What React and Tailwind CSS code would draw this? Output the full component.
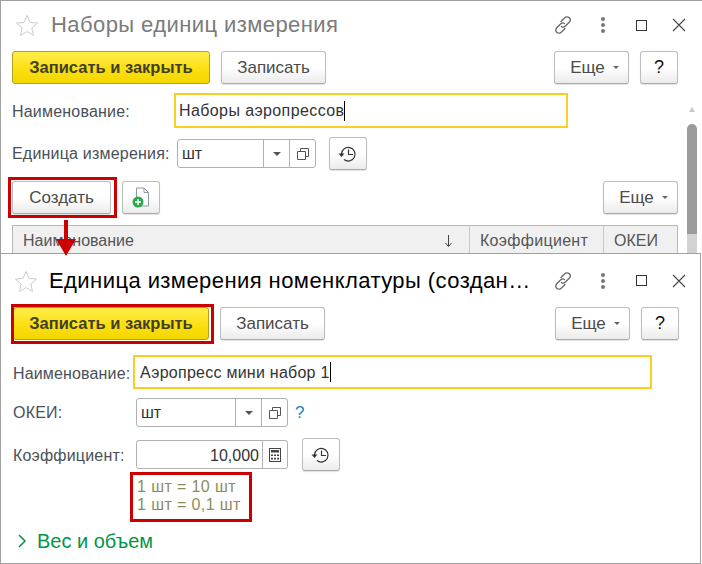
function Star({ className }) {
  return (
    <svg className={className} width="24" height="22" viewBox="0 0 24 22" fill="none" stroke="#c8ccd0" strokeWidth="1">
      <path d="M12 1.500l3 6.900 7.500.7-5.700 5 1.700 7.300L12 17.600 5.500 21.400l1.700-7.300-5.700-5 7.500-.7z" />
    </svg>
  );
}

function WindowIcons() {
  return (
    <div className="flex items-center">
      <svg width="22" height="22" viewBox="0 0 22 22" fill="none" stroke="#666" strokeWidth="1.300" strokeLinecap="round">
        <path d="M9 7.500l3.500-3.500c1.500-1.500 3.600-1.500 4.800-.3 1.300 1.300 1.200 3.300-.3 4.800L13.500 12c-1.300 1.300-3 1.300-4 .5" />
        <path d="M13 14.500L9.500 18c-1.500 1.500-3.600 1.500-4.800.3-1.300-1.300-1.200-3.300.3-4.800L8.500 10c1.300-1.300 3-1.300 4-.5" />
      </svg>
      <div className="ml-[27px] flex flex-col gap-[2px]">
        <div className="h-[4px] w-[4px] rounded-full bg-[#777]"></div>
        <div className="h-[4px] w-[4px] rounded-full bg-[#777]"></div>
        <div className="h-[4px] w-[4px] rounded-full bg-[#777]"></div>
      </div>
      <div className="ml-[31px] h-[11px] w-[11px] border border-[#333]"></div>
      <svg className="ml-[25px]" width="14" height="14" viewBox="0 0 14 14" stroke="#444" strokeWidth="1.100">
        <path d="M1 1l12 12M13 1L1 13" />
      </svg>
    </div>
  );
}

function Btn({ className = '', children }) {
  return (
    <button className={`flex h-[33px] shrink-0 items-center justify-center rounded-[3px] border border-[#bdbdbd] border-b-[#aaa] bg-gradient-to-b from-white from-50% to-[#ebebeb] text-[17px] text-[#4b4b4b] shadow-[0_1px_1px_rgba(0,0,0,0.12)] ${className}`}>
      {children}
    </button>
  );
}

function YellowBtn({ className = '' }) {
  return (
    <button className={`flex h-[33px] shrink-0 items-center justify-center rounded-[3px] border border-[#b5a020] bg-gradient-to-b from-[#ffec40] from-10% via-[#fce010] to-[#f4d600] text-[16.5px] font-bold text-[#3f3f2a] ${className}`}>
      Записать и закрыть
    </button>
  );
}

function EsheBtn({ className = '' }) {
  return (
    <Btn className={`pl-[6px] ${className}`}>
      <span>Еще</span>
      <span className="ml-[8px] h-0 w-0 border-x-[3px] border-t-[3px] border-x-transparent border-t-[#666]"></span>
    </Btn>
  );
}

function HelpBtn() {
  return <Btn className="ml-[11px] w-[38px] text-[18px] text-[#111]">?</Btn>;
}

function HistoryBtn({ className = '' }) {
  return (
    <Btn className={`w-[38px] ${className}`}>
      <svg width="20" height="18" viewBox="0 0 20 18" fill="none" stroke="#333" strokeWidth="1.200">
        <path d="M3.500 9A6.800 6.800 0 1 1 6 14.500" />
        <path d="M10.500 4.500V9.500H15" />
        <path d="M0.500 8.500h6L3.500 12z" fill="#333" stroke="none" />
      </svg>
    </Btn>
  );
}

function CopyIcon() {
  return (
    <svg width="12" height="12" viewBox="0 0 12 12" fill="none" stroke="#555" strokeWidth="1">
      <path d="M3.500 3.500V.5h8v8H8.500" />
      <path d="M.5 3.500h8v8h-8z" />
    </svg>
  );
}

function CalcIcon() {
  return (
    <svg width="12" height="14" viewBox="0 0 12 14">
      <rect x="0.500" y="0.500" width="11" height="13" fill="none" stroke="#444" />
      <rect x="2" y="2" width="8" height="2.500" fill="#444" />
      <path d="M2 6.500h2V8H2zM5 6.500h2V8H5zM8 6.500h2V8H8zM2 9.800h2v1.700H2zM5 9.800h2v1.700H5zM8 9.800h2v1.700H8z" fill="#444" />
    </svg>
  );
}

function SelectField({ widthClass, mainClass }) {
  return (
    <div className={`flex h-[29px] shrink-0 rounded-[3px] border border-[#b0b0b0] bg-white text-[16px] text-[#333] ${widthClass}`}>
      <div className={`flex items-center border-r border-[#b0b0b0] pl-[4px] ${mainClass}`}>шт</div>
      <div className="flex w-[26px] items-center justify-center border-r border-[#b0b0b0]">
        <span className="h-0 w-0 border-x-[4px] border-t-[4px] border-x-transparent border-t-[#555]"></span>
      </div>
      <div className="flex flex-1 items-center justify-center">
        <CopyIcon />
      </div>
    </div>
  );
}

function TopWindow() {
  return (
    <div className="flex h-[253px] overflow-hidden border-t border-l border-[#a0a0a0] pt-[1px]">
      <div className="w-[677px] shrink-0 pl-[11px]">
        <div className="flex h-[49px] items-center">
          <Star className="ml-[3px] -mt-[4px]" />
          <div className="ml-[12px] -mt-[4px] text-[22px] tracking-[0.42px] text-[#7b7b7b]">Наборы единиц измерения</div>
          <div className="ml-auto -mr-[8px] -mt-[3px]">
            <WindowIcons />
          </div>
        </div>
        <div className="flex">
          <YellowBtn className="w-[198px]" />
          <Btn className="ml-[11px] w-[105px]">Записать</Btn>
          <EsheBtn className="ml-auto w-[75px]" />
          <HelpBtn />
        </div>
        <div className="mt-[9px] flex h-[35px] items-center">
          <div className="mt-[2px] w-[162px] text-[16px] tracking-[0.2px] text-[#4a5058]">Наименование:</div>
          <div className="flex h-[35px] w-[394px] items-center border-2 border-[#fbce22] pl-[3px] text-[16px] tracking-[0.4px] text-[#333]">
            Наборы аэропрессов<span className="h-[20px] w-px bg-black"></span>
          </div>
        </div>
        <div className="mt-[9px] flex h-[33px] items-center">
          <div className="w-[165px] text-[16px] tracking-[0.2px] text-[#4a5058]">Единица измерения:</div>
          <SelectField widthClass="w-[139px]" mainClass="w-[86px]" />
          <HistoryBtn className="ml-[13px]" />
        </div>
        <div className="mt-[11px] flex">
          <Btn className="w-[99px]">Создать</Btn>
          <Btn className="ml-[11px] w-[38px]">
            <svg width="18" height="21" viewBox="0 0 18 21">
              <path d="M4.500 1h7.500l4.500 4.500V19h-12z" fill="#fff" stroke="#8b98a8" />
              <path d="M12 1v4.500h4.500" fill="none" stroke="#8b98a8" />
              <circle cx="6" cy="15" r="5.500" fill="#2ea84a" />
              <path d="M3 15h6M6 12v6" stroke="#fff" strokeWidth="1.500" />
            </svg>
          </Btn>
          <EsheBtn className="ml-auto w-[75px]" />
        </div>
        <div className="mt-[11px] flex h-[28px] w-[666px] border border-b-0 border-[#b8b8b8] bg-[#f0f0f0] text-[16px] text-[#555]">
          <div className="flex h-full w-[457px] items-center border-r border-[#c8c8c8] pt-[3px] pl-[10px]">
            <span>Наименование</span>
            <svg className="ml-auto mr-[16px]" width="9" height="12" viewBox="0 0 9 12" stroke="#444" fill="none">
              <path d="M4.500 0v11M1.500 8l3 3.500 3-3.500" />
            </svg>
          </div>
          <div className="flex h-full w-[134px] items-center border-r border-[#c8c8c8] pt-[3px] pl-[10px] tracking-[0.3px]">Коэффициент</div>
          <div className="flex h-full flex-1 items-center pt-[3px] pl-[10px]">ОКЕИ</div>
        </div>
      </div>
      <div className="ml-[9px] flex w-[10px] shrink-0 flex-col items-center pt-[105px]">
        <span className="h-0 w-0 border-x-[3px] border-b-[5px] border-x-transparent border-b-[#c8c8c8]"></span>
        <div className="mt-[12px] h-[116px] w-full shrink-0 rounded-full bg-[#9b9b9b]"></div>
        <div className="-mt-[6px] h-[30px] w-full shrink-0 bg-[#d2d2d2]"></div>
      </div>
    </div>
  );
}

function BottomWindow() {
  return (
    <div className="h-[311px] w-[701px] border border-[#a0a0a0] bg-white pl-[12px]">
      <div className="flex h-[53px] items-center">
        <Star className="ml-[1px] mt-[1px]" />
        <div className="ml-[11px] text-[22px] tracking-[0.43px] whitespace-nowrap text-black">
          Единица измерения номенклатуры (создан…
        </div>
        <div className="ml-auto mr-[14px]">
          <WindowIcons />
        </div>
      </div>
      <div className="flex w-[666px]">
        <YellowBtn className="w-[196px]" />
        <Btn className="ml-[11px] w-[105px]">Записать</Btn>
        <EsheBtn className="ml-auto w-[75px]" />
        <HelpBtn />
      </div>
      <div className="mt-[15px] flex h-[34px] items-center">
        <div className="mt-[3px] w-[120px] text-[16px] tracking-[0.15px] whitespace-nowrap text-[#4a5058]">Наименование:</div>
        <div className="flex h-[34px] w-[519px] items-center border-2 border-[#fbce22] pt-[2px] pl-[5px] text-[16px] tracking-[0.25px] text-[#333]">
          Аэропресс мини набор 1<span className="-mt-[2px] h-[20px] w-px bg-black"></span>
        </div>
      </div>
      <div className="mt-[9px] flex h-[29px] items-center">
        <div className="w-[123px] text-[16px] tracking-[0.2px] text-[#4a5058]">ОКЕИ:</div>
        <SelectField widthClass="w-[152px]" mainClass="w-[99px]" />
        <span className="ml-[7px] text-[17px] text-[#1a82c4]">?</span>
      </div>
      <div className="mt-[11px] flex h-[33px] items-center">
        <div className="mt-[2px] w-[123px] text-[16px] tracking-[0.2px] text-[#4a5058]">Коэффициент:</div>
        <div className="flex h-[29px] w-[152px] shrink-0 rounded-[3px] border border-[#b0b0b0] text-[16px] text-[#333]">
          <div className="flex w-[126px] items-center justify-end border-r border-[#b0b0b0] pt-[2px] pr-[3px]">10,000</div>
          <div className="flex flex-1 items-center justify-center">
            <CalcIcon />
          </div>
        </div>
        <HistoryBtn className="ml-[14px]" />
      </div>
      <div className="ml-[124px] mt-[7px] text-[16px] leading-[18px] tracking-[0.4px] text-[#8c8c5e]">
        <div>1 шт = 10 шт</div>
        <div>1 шт = 0,1 шт</div>
      </div>
      <div className="mt-[16px] flex h-[22px] items-center text-[20px] text-[#009646]">
        <svg className="ml-[5px]" width="9" height="14" viewBox="0 0 9 14" fill="none" stroke="#009646" strokeWidth="1.500">
          <path d="M1 1l6 6-6 6" />
        </svg>
        <span className="ml-[10px]">Вес и объем</span>
      </div>
    </div>
  );
}

export default function App() {
  return (
    <div className="relative h-[564px] w-[702px] overflow-hidden bg-white font-['Liberation_Sans',Arial,sans-serif]">
      <TopWindow />
      <BottomWindow />

      {/* red annotations */}
      <div className="absolute left-[8px] top-[177px] h-[41px] w-[109px] border-[3px] border-[#cc0000]"></div>
      <div className="absolute left-[11px] top-[304px] h-[40px] w-[203px] border-[3px] border-[#cc0000]"></div>
      <div className="absolute left-[130px] top-[472px] h-[50px] w-[122px] border-[3px] border-[#cc0000]"></div>
      <svg className="absolute left-[56px] top-[220px]" width="20" height="36" viewBox="0 0 20 36">
        <path d="M8 0h4v19h8L10 36 0 19h8z" fill="#cc0000" />
      </svg>
    </div>
  );
}
